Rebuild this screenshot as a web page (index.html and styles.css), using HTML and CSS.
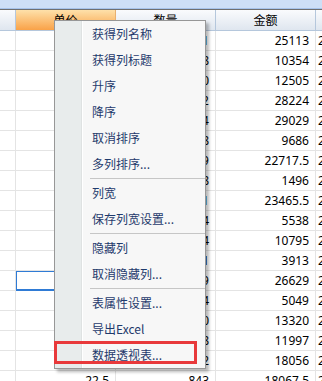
FILE: index.html
```html
<!DOCTYPE html>
<html>
<head>
<meta charset="utf-8">
<link rel="stylesheet" href="styles.css">
</head>
<body>
<div class="topbar"></div>
<div class="grid">
  <div class="hd"></div><div class="hd active">单价</div><div class="hd">数量</div><div class="hd">金额</div><div class="hd last"></div>
  <div class="c"></div><div class="c">21</div><div class="c">1191</div><div class="c">25113</div><div class="c l">2019-05-12</div>
  <div class="c"></div><div class="c">19</div><div class="c">548</div><div class="c">10354</div><div class="c l">2019-05-12</div>
  <div class="c"></div><div class="c">25</div><div class="c">500</div><div class="c">12505</div><div class="c l">2019-05-13</div>
  <div class="c"></div><div class="c">24</div><div class="c">1172</div><div class="c">28224</div><div class="c l">2019-05-13</div>
  <div class="c"></div><div class="c">23</div><div class="c">1264</div><div class="c">29029</div><div class="c l">2019-05-14</div>
  <div class="c"></div><div class="c">22</div><div class="c">438</div><div class="c">9686</div><div class="c l">2019-05-14</div>
  <div class="c"></div><div class="c">22.5</div><div class="c">1009</div><div class="c">22717.5</div><div class="c l">2019-05-15</div>
  <div class="c"></div><div class="c">22</div><div class="c">68</div><div class="c">1496</div><div class="c l">2019-05-15</div>
  <div class="c"></div><div class="c">22.5</div><div class="c">1041</div><div class="c">23465.5</div><div class="c l">2019-05-16</div>
  <div class="c"></div><div class="c">23</div><div class="c">244</div><div class="c">5538</div><div class="c l">2019-05-16</div>
  <div class="c"></div><div class="c">21</div><div class="c">514</div><div class="c">10795</div><div class="c l">2019-05-17</div>
  <div class="c"></div><div class="c">21</div><div class="c">181</div><div class="c">3913</div><div class="c l">2019-05-17</div>
  <div class="c"></div><div class="c sel">23</div><div class="c">1159</div><div class="c">26629</div><div class="c l">2019-05-18</div>
  <div class="c"></div><div class="c">22</div><div class="c">224</div><div class="c">5049</div><div class="c l">2019-05-18</div>
  <div class="c"></div><div class="c">24</div><div class="c">560</div><div class="c">13320</div><div class="c l">2019-05-19</div>
  <div class="c"></div><div class="c">23</div><div class="c">518</div><div class="c">11997</div><div class="c l">2019-05-19</div>
  <div class="c"></div><div class="c">22</div><div class="c">822</div><div class="c">18056</div><div class="c l">2019-05-20</div>
  <div class="c"></div><div class="c">22.5</div><div class="c">843</div><div class="c">18067.5</div><div class="c l">2019-05-20</div>
</div>

<div class="menu">
  <div class="item">获得列名称</div>
  <div class="item">获得列标题</div>
  <div class="item">升序</div>
  <div class="item">降序</div>
  <div class="item">取消排序</div>
  <div class="item">多列排序...</div>
  <div class="sep"></div>
  <div class="item">列宽</div>
  <div class="item">保存列宽设置...</div>
  <div class="sep"></div>
  <div class="item">隐藏列</div>
  <div class="item">取消隐藏列...</div>
  <div class="sep"></div>
  <div class="item">表属性设置...</div>
  <div class="item">导出Excel</div>
  <div class="item">数据透视表...</div>
</div>
<div class="mark"></div>
</body>
</html>
```
FILE: styles.css
```css
body {
  margin: 0;
  width: 322px;
  height: 381px;
  overflow: hidden;
  position: relative;
  background: #ffffff;
  font-family: "Noto Sans", "Noto Sans CJK SC", sans-serif;
  font-size: 12px;
  color: #000;
}

.topbar {
  height: 8px;
  background: #cddff6;
  border-bottom: 1px solid #a6c3ea;
}

.grid {
  display: grid;
  grid-template-columns: 16px 100px 100px 100px 100px;
  grid-template-rows: 21px;
  grid-auto-rows: 20px;
  width: 416px;
  border-top: 1px solid #6f6f6f;
}

.hd {
  box-sizing: border-box;
  background: linear-gradient(#fafbfd, #dfe6ef);
  border-right: 1px solid #b5c7dc;
  border-bottom: 1px solid #b5c7dc;
  text-align: center;
  line-height: 20px;
  font-family: "Noto Sans CJK SC", sans-serif;
  font-size: 12px;
  white-space: nowrap;
}

.hd.active {
  background: linear-gradient(#fee1aa, #f9a248);
  border-right-color: #e8b070;
}

.c {
  box-sizing: border-box;
  border-right: 1px solid #e4e4e4;
  border-bottom: 1px solid #e4e4e4;
  text-align: right;
  padding-right: 6px;
  line-height: 19px;
  white-space: nowrap;
  overflow: hidden;
}

.c.l {
  text-align: left;
  padding-left: 2px;
  padding-right: 0;
}

.c.sel {
  box-shadow: inset 0 0 0 1px #2f7bd5;
  border-bottom-color: #2f7bd5;
}

.menu {
  position: absolute;
  left: 54px;
  top: 20px;
  width: 152px;
  box-sizing: border-box;
  border: 1px solid #979797;
  background: linear-gradient(to right, #e8ecec 0, #e8ecec 26px, #dfe2e2 26px, #dfe2e2 27px, #ffffff 27px, #ffffff 28px, #f7f7f7 28px);
  box-shadow: 3px 3px 3px rgba(0, 0, 0, 0.28);
}

.item {
  height: 26px;
  line-height: 26px;
  padding-left: 37px;
  font-family: "Noto Sans CJK SC", sans-serif;
  font-size: 12px;
  color: #1f3a6c;
  white-space: nowrap;
}

.sep {
  height: 1px;
  margin: 1px 0 1px 35px;
  background: #c6c6c6;
}

.mark {
  position: absolute;
  left: 54px;
  top: 341px;
  width: 143px;
  height: 23px;
  box-sizing: border-box;
  border: 3px solid #e8393b;
}
```
